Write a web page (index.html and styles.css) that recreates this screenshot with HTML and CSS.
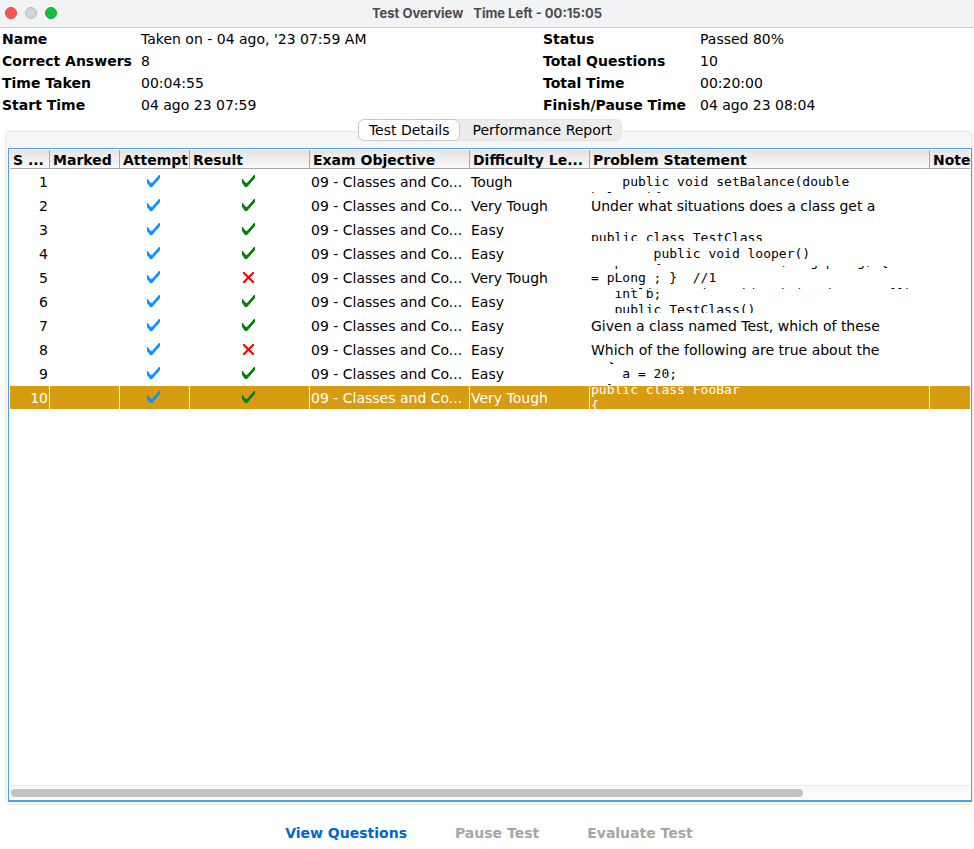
FILE: index.html
```html
<!DOCTYPE html>
<html lang="en">
<head>
<meta charset="utf-8">
<title>Test Overview</title>
<link rel="stylesheet" href="styles.css">
</head>
<body>
<svg class="defs" aria-hidden="true">
  <symbol id="check" viewBox="0 0 13 12"><path d="M0 4H1L2 6L4 8H5L12 0H13V3L5 12H3L0 8Z"/></symbol>
  <symbol id="cross" viewBox="0 0 11 11"><path d="M0 0L11 11M11 0L0 11" stroke="#f00000" stroke-width="2"/></symbol>
</svg>
<header class="titlebar">
  <div class="lights">
    <button class="light close" aria-label="Close"></button>
    <button class="light minimize" aria-label="Minimize"></button>
    <button class="light zoom" aria-label="Zoom"></button>
  </div>
  <h1 class="title"><span>Test Overview</span><span>Time Left - 00:15:05</span></h1>
</header>
<main class="content">
  <section class="summary">
    <dl>
      <dt>Name</dt><dd>Taken on - 04 ago, '23 07:59 AM</dd>
      <dt>Correct Answers</dt><dd>8</dd>
      <dt>Time Taken</dt><dd>00:04:55</dd>
      <dt>Start Time</dt><dd>04 ago 23 07:59</dd>
    </dl>
    <dl class="second">
      <dt>Status</dt><dd>Passed 80%</dd>
      <dt>Total Questions</dt><dd>10</dd>
      <dt>Total Time</dt><dd>00:20:00</dd>
      <dt>Finish/Pause Time</dt><dd>04 ago 23 08:04</dd>
    </dl>
  </section>
  <section class="panel">
    <div class="tabs">
      <button class="tab selected">Test Details</button>
      <button class="tab">Performance Report</button>
    </div>
    <div class="frame">
      <table>
        <colgroup><col class="c-num"><col class="c-mark"><col class="c-mark"><col class="c-result"><col class="c-obj"><col class="c-diff"><col class="c-problem"><col></colgroup>
        <thead>
          <tr><th>S ...</th><th>Marked</th><th>Attempt</th><th>Result</th><th>Exam Objective</th><th>Difficulty Le...</th><th>Problem Statement</th><th>Note</th></tr>
        </thead>
        <tbody>
          <tr><td class="num">1</td><td></td><td class="icon"><svg class="check tried"><use href="#check"/></svg></td><td class="icon"><svg class="check right"><use href="#check"/></svg></td><td>09 - Classes and Co...</td><td>Tough</td><td class="code"><pre>

    public void setBalance(double
balance){</pre></td><td></td></tr>
          <tr><td class="num">2</td><td></td><td class="icon"><svg class="check tried"><use href="#check"/></svg></td><td class="icon"><svg class="check right"><use href="#check"/></svg></td><td>09 - Classes and Co...</td><td>Very Tough</td><td>Under what situations does a class get a</td><td></td></tr>
          <tr><td class="num">3</td><td></td><td class="icon"><svg class="check tried"><use href="#check"/></svg></td><td class="icon"><svg class="check right"><use href="#check"/></svg></td><td>09 - Classes and Co...</td><td>Easy</td><td class="code"><pre>

public class TestClass</pre></td><td></td></tr>
          <tr><td class="num">4</td><td></td><td class="icon"><svg class="check tried"><use href="#check"/></svg></td><td class="icon"><svg class="check right"><use href="#check"/></svg></td><td>09 - Classes and Co...</td><td>Easy</td><td class="code"><pre>

        public void looper()
        {</pre></td><td></td></tr>
          <tr><td class="num">5</td><td></td><td class="icon"><svg class="check tried"><use href="#check"/></svg></td><td class="icon"><svg class="cross"><use href="#cross"/></svg></td><td>09 - Classes and Co...</td><td>Very Tough</td><td class="code"><pre>   public void setValues(long pLong) { 
= pLong ; }  //1
   public static void main(String args[])</pre></td><td></td></tr>
          <tr><td class="num">6</td><td></td><td class="icon"><svg class="check tried"><use href="#check"/></svg></td><td class="icon"><svg class="check right"><use href="#check"/></svg></td><td>09 - Classes and Co...</td><td>Easy</td><td class="code"><pre>   int b;
   public TestClass()</pre></td><td></td></tr>
          <tr><td class="num">7</td><td></td><td class="icon"><svg class="check tried"><use href="#check"/></svg></td><td class="icon"><svg class="check right"><use href="#check"/></svg></td><td>09 - Classes and Co...</td><td>Easy</td><td>Given a class named Test, which of these</td><td></td></tr>
          <tr><td class="num">8</td><td></td><td class="icon"><svg class="check tried"><use href="#check"/></svg></td><td class="icon"><svg class="cross"><use href="#cross"/></svg></td><td>09 - Classes and Co...</td><td>Easy</td><td>Which of the following are true about the</td><td></td></tr>
          <tr><td class="num">9</td><td></td><td class="icon"><svg class="check tried"><use href="#check"/></svg></td><td class="icon"><svg class="check right"><use href="#check"/></svg></td><td>09 - Classes and Co...</td><td>Easy</td><td class="code"><pre>  {
    a = 20;
  }</pre></td><td></td></tr>
          <tr class="current"><td class="num">10</td><td></td><td class="icon"><svg class="check tried"><use href="#check"/></svg></td><td class="icon"><svg class="check right"><use href="#check"/></svg></td><td>09 - Classes and Co...</td><td>Very Tough</td><td class="code"><pre>public class FooBar
{</pre></td><td></td></tr>
        </tbody>
      </table>
      <div class="scrollbar"><div class="thumb"></div></div>
    </div>
  </section>
</main>
<footer class="actions">
  <button class="primary">View Questions</button>
  <button disabled>Pause Test</button>
  <button disabled>Evaluate Test</button>
</footer>
</body>
</html>
```
FILE: styles.css
```css
* { box-sizing: border-box; }

body {
  margin: 0;
  height: 100vh;
  display: flex;
  flex-direction: column;
  background: #fff;
  color: #000;
  font: 14px/22px "DejaVu Sans", Verdana, sans-serif;
}

button { border: 0; padding: 0; background: none; font: inherit; color: inherit; }
.defs { position: absolute; width: 0; height: 0; }

.titlebar {
  display: grid;
  grid-template-columns: 1fr auto 1fr;
  align-items: center;
  height: 28px;
  padding: 0 5px 2px;
  background: #f1f3f5;
  border-bottom: 1px solid #d2d2d2;
}
.lights { display: flex; gap: 8px; }
.light { width: 12px; height: 12px; border-radius: 50%; border: 1px solid; }
.close { background: #ff5350; border-color: #e2443f; }
.minimize { background: #d3d4d6; border-color: #b9babc; }
.zoom { background: #10c040; border-color: #0cab33; }
.title {
  display: flex;
  gap: 10px;
  margin: 0;
  color: #4b4c4d;
  font: bold 13px/24px Inter, sans-serif;
}

.content { flex: 1; min-height: 0; display: flex; flex-direction: column; }
.summary { display: grid; grid-template-columns: 541px 1fr; padding: 0 2px; }
dl { display: grid; grid-template-columns: 139px 1fr; margin: 0; }
dl.second { grid-template-columns: 157px 1fr; }
dt { font-weight: bold; white-space: nowrap; }
dd { margin: 0; white-space: nowrap; }

.panel {
  flex: 1;
  min-height: 0;
  display: flex;
  flex-direction: column;
  margin: 15px 1px 0 5px;
  padding: 0 0 2px 2px;
  border: 1px solid #e9e9e9;
  border-radius: 5px;
  background: #f6f6f6;
}
.tabs {
  display: flex;
  align-self: center;
  height: 22px;
  margin: -13px 0 7px;
  border: 1px solid #e3e3e3;
  border-radius: 6px;
  background: #ececec;
}
.tab { padding: 0 9px 0 12px; line-height: 20px; }
.tab.selected {
  margin: -1px 0 -1px -1px;
  padding: 0 10px;
  border: 1px solid #c8c8c8;
  border-radius: 6px;
  background: #fff;
}

.frame {
  flex: 1;
  min-height: 0;
  display: flex;
  flex-direction: column;
  justify-content: space-between;
  padding: 1px;
  border: 1px solid #4fa0e0;
  border-bottom-width: 2px;
  background: #fff;
  overflow: hidden;
}
table { width: 100%; table-layout: fixed; border-collapse: separate; border-spacing: 0; }
.c-num { width: 40px; }
.c-mark { width: 70px; }
.c-result { width: 120px; }
.c-obj { width: 160px; }
.c-diff { width: 120px; }
.c-problem { width: 340px; }
th {
  height: 19px;
  padding: 2px 0 0 3px;
  border-right: 1px solid #a8a8a8;
  border-bottom: 1px solid #a8a8a8;
  background: linear-gradient(#e4e4e4, #f9f9f9);
  line-height: 16px;
  text-align: left;
  white-space: nowrap;
}
th:last-child { border-right: 0; }
td {
  height: 24px;
  padding: 2px 0 0 1px;
  border-right: 1px solid #fff;
  border-top: 1px solid #fff;
  line-height: 21px;
  white-space: nowrap;
}
td.num { padding: 2px 1px 0 0; text-align: right; }
td:last-child { border-right: 0; }
td.code { padding-top: 0; }
.current td { background: #d89c12; color: #fff; }
td.icon { padding: 0 2px 0 0; }
.icon svg { display: block; margin: 0 auto 1px; }
.check { width: 13px; height: 12px; }
.cross { width: 11px; height: 11px; }
.tried { fill: #0096ff; }
.right { fill: #008000; }
pre {
  display: flex;
  align-items: center;
  height: 23px;
  margin: 0;
  overflow: hidden;
  font: 13px/16px "DejaVu Sans Mono", monospace;
}
.scrollbar { height: 14px; padding: 3px 1px; border-top: 1px solid #e6e6e6; background: #fafafa; }
.thumb { width: 82.7%; height: 8px; border-radius: 4px; background: #c1c1c1; }

.actions {
  display: flex;
  justify-content: center;
  gap: 48px;
  padding: 17px 0 5px 4px;
  font-weight: bold;
}
.actions button { color: #a6a6a6; }
.actions .primary { color: #0066c8; }
```
